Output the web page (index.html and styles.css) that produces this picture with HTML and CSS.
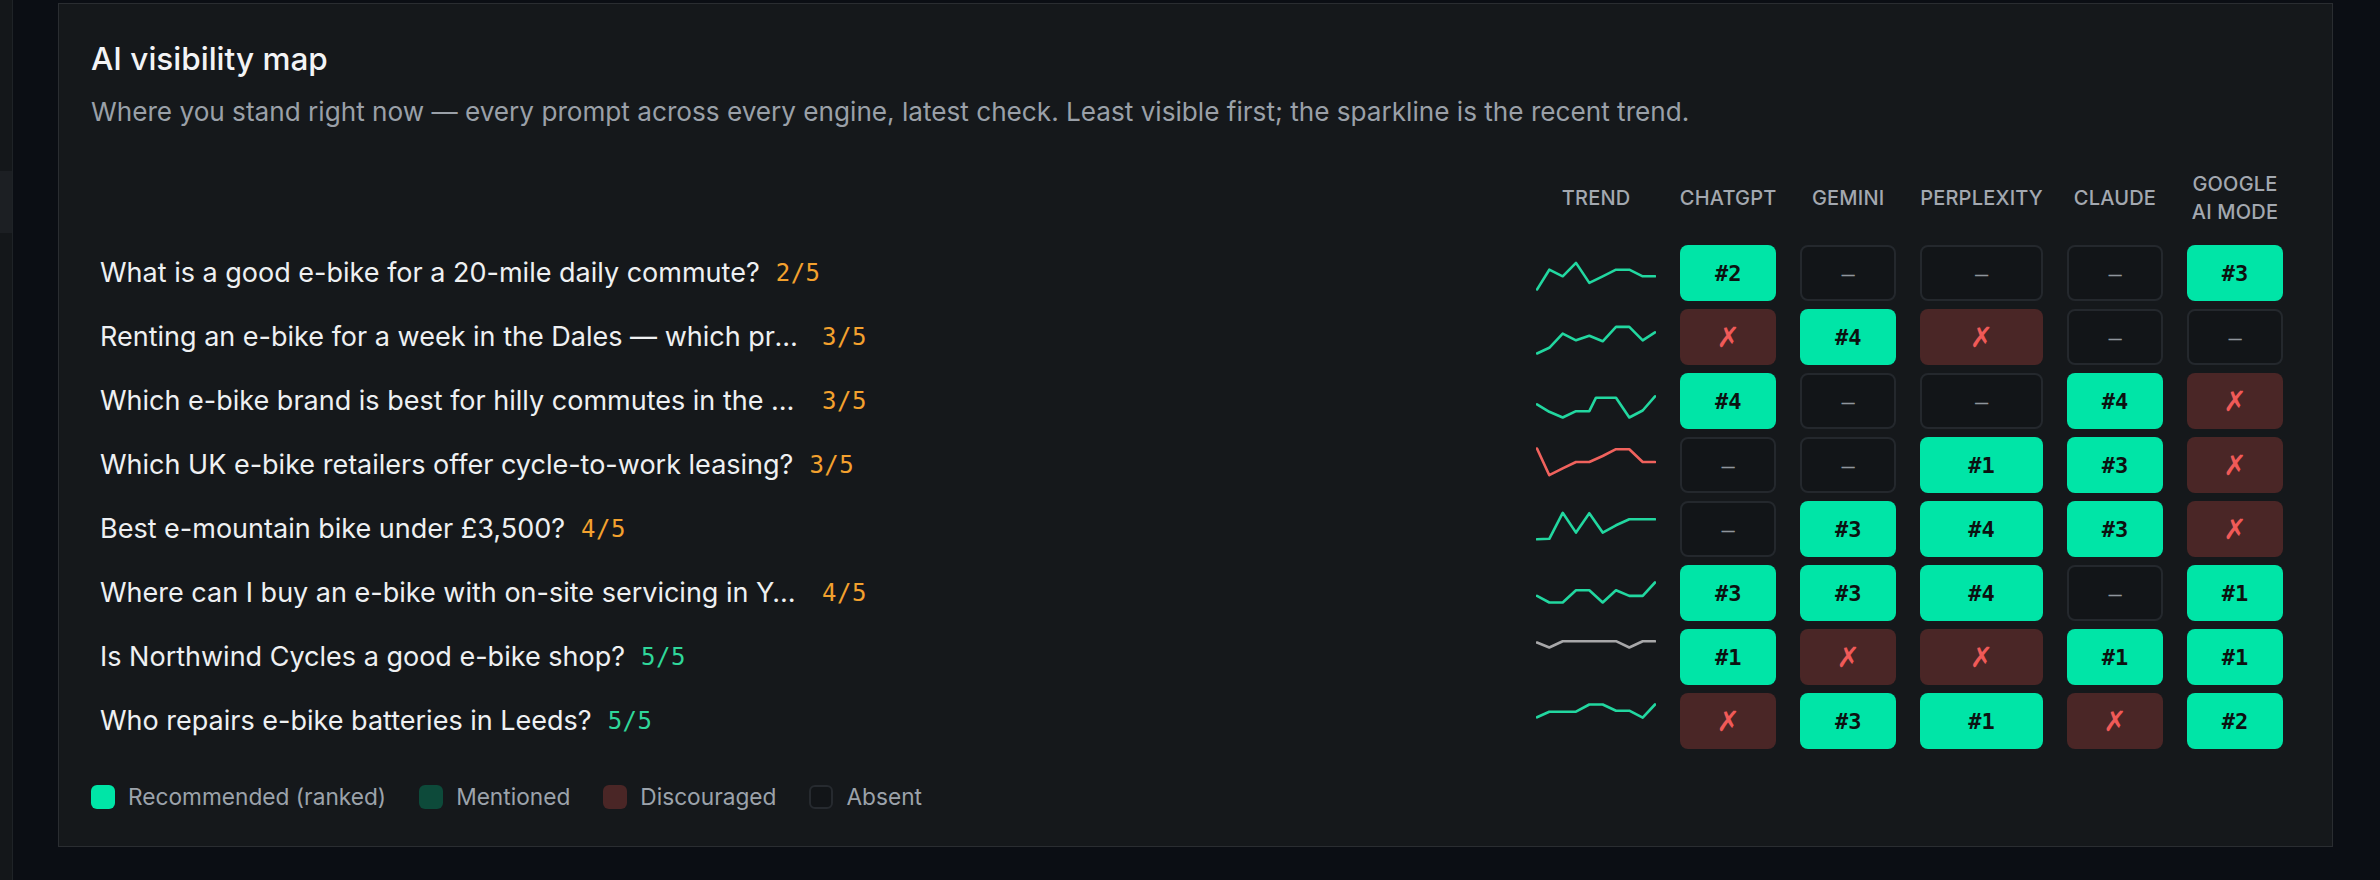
FILE: index.html
```html
<!DOCTYPE html>
<html lang="en">
<head>
<meta charset="utf-8">
<title>AI visibility map</title>
<link rel="stylesheet" href="styles.css">
</head>
<body>
<div class="app">
  <aside class="rail"><div class="rail-hl"></div></aside>
  <main class="main">
    <section class="card">
      <h2 class="title">AI visibility map</h2>
      <p class="sub">Where you stand right now — every prompt across every engine, latest check. Least visible first; the sparkline is the recent trend.</p>

      <div class="grid">
        <div class="hd hd-q"></div>
        <div class="hd">Trend</div>
        <div class="hd">ChatGPT</div>
        <div class="hd">Gemini</div>
        <div class="hd">Perplexity</div>
        <div class="hd">Claude</div>
        <div class="hd">Google<br>AI Mode</div>

        <div class="q"><span class="q-text">What is a good e-bike for a 20-mile daily commute?</span><span class="score warn">2/5</span></div>
        <div class="trend"><svg viewBox="0 0 120 36" width="120" height="36"><polyline class="spark up" points="1,34.5 13.3,14.7 26.7,21.3 40,7.9 53.3,27.9 66.7,21.3 80,14.7 93.3,14.7 106.7,21.3 119,21.3"/></svg></div>
        <div class="cell rec">#2</div>
        <div class="cell abs">–</div>
        <div class="cell abs">–</div>
        <div class="cell abs">–</div>
        <div class="cell rec">#3</div>

        <div class="q"><span class="q-text">Renting an e-bike for a week in the Dales — which provider should I use?</span><span class="score warn">3/5</span></div>
        <div class="trend"><svg viewBox="0 0 120 36" width="120" height="36"><polyline class="spark up" points="1,34.5 13.3,28.8 26.7,14.7 40,21.3 53.3,16.7 66.7,22.3 80,7.9 93.3,7.9 106.7,21.3 119,13.3"/></svg></div>
        <div class="cell dis">✗</div>
        <div class="cell rec">#4</div>
        <div class="cell dis">✗</div>
        <div class="cell abs">–</div>
        <div class="cell abs">–</div>

        <div class="q"><span class="q-text">Which e-bike brand is best for hilly commutes in the Pennines?</span><span class="score warn">3/5</span></div>
        <div class="trend"><svg viewBox="0 0 120 36" width="120" height="36"><polyline class="spark up" points="1,21.3 13.3,28.8 26.7,34.5 40,28.2 53.3,28.2 60,14.7 80,14.7 93.3,34.5 106.7,27.5 119,13.3"/></svg></div>
        <div class="cell rec">#4</div>
        <div class="cell abs">–</div>
        <div class="cell abs">–</div>
        <div class="cell rec">#4</div>
        <div class="cell dis">✗</div>

        <div class="q"><span class="q-text">Which UK e-bike retailers offer cycle-to-work leasing?</span><span class="score warn">3/5</span></div>
        <div class="trend"><svg viewBox="0 0 120 36" width="120" height="36"><polyline class="spark down" points="1,1.5 13.3,28.2 26.7,21.3 40,15 53.3,15 66.7,9 80,2.2 93.3,2.2 106.7,15 119,15"/></svg></div>
        <div class="cell abs">–</div>
        <div class="cell abs">–</div>
        <div class="cell rec">#1</div>
        <div class="cell rec">#3</div>
        <div class="cell dis">✗</div>

        <div class="q"><span class="q-text">Best e-mountain bike under £3,500?</span><span class="score warn">4/5</span></div>
        <div class="trend"><svg viewBox="0 0 120 36" width="120" height="36"><polyline class="spark up" points="1,28.3 13.3,27.8 26.7,1.8 40,21.6 53.3,2.2 66.7,21.6 80,14.3 93.3,8.3 106.7,8.3 119,8.3"/></svg></div>
        <div class="cell abs">–</div>
        <div class="cell rec">#3</div>
        <div class="cell rec">#4</div>
        <div class="cell rec">#3</div>
        <div class="cell dis">✗</div>

        <div class="q"><span class="q-text">Where can I buy an e-bike with on-site servicing in Yorkshire?</span><span class="score warn">4/5</span></div>
        <div class="trend"><svg viewBox="0 0 120 36" width="120" height="36"><polyline class="spark up" points="1,20.9 13.3,27.5 26.7,27.5 40,15.2 53.3,15.2 66.7,27.5 80,15.2 93.3,20.9 106.7,20.9 119,7.5"/></svg></div>
        <div class="cell rec">#3</div>
        <div class="cell rec">#3</div>
        <div class="cell rec">#4</div>
        <div class="cell abs">–</div>
        <div class="cell rec">#1</div>

        <div class="q"><span class="q-text">Is Northwind Cycles a good e-bike shop?</span><span class="score good">5/5</span></div>
        <div class="trend"><svg viewBox="0 0 120 36" width="120" height="36"><polyline class="spark flat" points="1,3.5 13.3,8.5 26.7,2.2 40,2.2 53.3,2.2 66.7,2.2 80,2.2 93.3,8.5 106.7,2.2 119,2.2"/></svg></div>
        <div class="cell rec">#1</div>
        <div class="cell dis">✗</div>
        <div class="cell dis">✗</div>
        <div class="cell rec">#1</div>
        <div class="cell rec">#1</div>

        <div class="q"><span class="q-text">Who repairs e-bike batteries in Leeds?</span><span class="score good">5/5</span></div>
        <div class="trend"><svg viewBox="0 0 120 36" width="120" height="36"><polyline class="spark up" points="1,14.3 13.3,8.7 26.7,8.7 40,8.7 53.3,1.5 66.7,1.5 80,7.7 93.3,7.7 106.7,14.7 119,1.5"/></svg></div>
        <div class="cell dis">✗</div>
        <div class="cell rec">#3</div>
        <div class="cell rec">#1</div>
        <div class="cell dis">✗</div>
        <div class="cell rec">#2</div>
      </div>

      <div class="legend">
        <span class="lg"><span class="sw sw-rec"></span>Recommended (ranked)</span>
        <span class="lg"><span class="sw sw-men"></span>Mentioned</span>
        <span class="lg"><span class="sw sw-dis"></span>Discouraged</span>
        <span class="lg"><span class="sw sw-abs"></span>Absent</span>
      </div>
    </section>
  </main>
</div>
</body>
</html>
```

FILE: styles.css
```css
* { box-sizing: border-box; }

html, body {
  margin: 0;
  padding: 0;
  background: #0b0e14;
  font-family: Inter, "Noto Sans", "Liberation Sans", sans-serif;
  color: #eef0f2;
}

.app {
  display: flex;
  width: 2380px;
  height: 880px;
}

.rail {
  width: 13px;
  flex: none;
  background: #14171a;
  border-right: 1px solid #1f2327;
  padding-top: 171px;
}

.rail-hl {
  height: 62px;
  background: #1c1f23;
}

.main {
  flex: 1;
  padding: 3px 47px 0 45px;
}

.card {
  background: #15181b;
  border: 1px solid #2a2d31;
  padding: 37px 49px 35px 32px;
}

.title {
  margin: 0;
  font-size: 31.5px;
  line-height: 36px;
  font-weight: 500;
  color: #f3f4f6;
}

.sub {
  margin: 19px 0 0;
  font-size: 26.15px;
  line-height: 32px;
  color: #9aa0a8;
}

.grid {
  margin-top: 42px;
  display: grid;
  grid-template-columns: minmax(0, 1fr) 120px 96px 96px minmax(96px, max-content) 96px 96px;
  column-gap: 24px;
  row-gap: 8px;
  align-items: center;
}

.hd {
  height: 56px;
  margin-bottom: 11px;
  display: flex;
  align-items: center;
  justify-content: center;
  text-align: center;
  font-size: 20px;
  line-height: 28px;
  font-weight: 500;
  text-transform: uppercase;
  letter-spacing: 0.01em;
  color: #a3a8b0;
  white-space: nowrap;
}

.q {
  display: flex;
  align-items: center;
  gap: 16px;
  padding-left: 9px;
  height: 56px;
  min-width: 0;
}

.q-text {
  font-size: 27px;
  line-height: 34px;
  color: #eef0f2;
  white-space: nowrap;
  overflow: hidden;
  text-overflow: ellipsis;
  max-width: 706px;
}

.score {
  font-family: "DejaVu Sans Mono", "Liberation Mono", monospace;
  font-size: 24px;
  letter-spacing: 0.5px;
  line-height: 32px;
  flex: none;
}

.score.warn { color: #f3a12e; }
.score.good { color: #2fd79a; }

.trend {
  height: 56px;
  display: flex;
  align-items: center;
}

.trend svg { display: block; }

.spark {
  fill: none;
  stroke-width: 2.6;
  stroke-linejoin: round;
  stroke-linecap: round;
}

.spark.up { stroke: #22d7a0; }
.spark.down { stroke: #f0625d; }
.spark.flat { stroke: #a7a7a9; }

.cell {
  height: 56px;
  border-radius: 8px;
  display: flex;
  align-items: center;
  justify-content: center;
  font-family: "DejaVu Sans Mono", "Liberation Mono", monospace;
  font-size: 22px;
  font-weight: 700;
}

.cell.rec {
  background: #00e5a7;
  color: #0c1211;
}

.cell.abs {
  background: #121518;
  border: 2px solid #24282d;
  color: #8f959c;
  font-weight: 400;
}

.cell.dis {
  background: #4a2626;
  color: #f05a58;
  font-family: "DejaVu Sans", sans-serif;
  font-weight: 400;
  font-size: 28px;
}

.legend {
  margin-top: 34px;
  display: flex;
  align-items: center;
  gap: 33px;
  height: 28px;
}

.lg {
  display: flex;
  align-items: center;
  gap: 13px;
  font-size: 22.7px;
  line-height: 28px;
  color: #9ca3ab;
}

.sw {
  width: 24px;
  height: 24px;
  border-radius: 6px;
  flex: none;
}

.sw-rec { background: #00e5a7; }
.sw-men { background: #0d4a3a; }
.sw-dis { background: #4a2626; }
.sw-abs { border: 2px solid #262a2f; background: #121518; }
```
